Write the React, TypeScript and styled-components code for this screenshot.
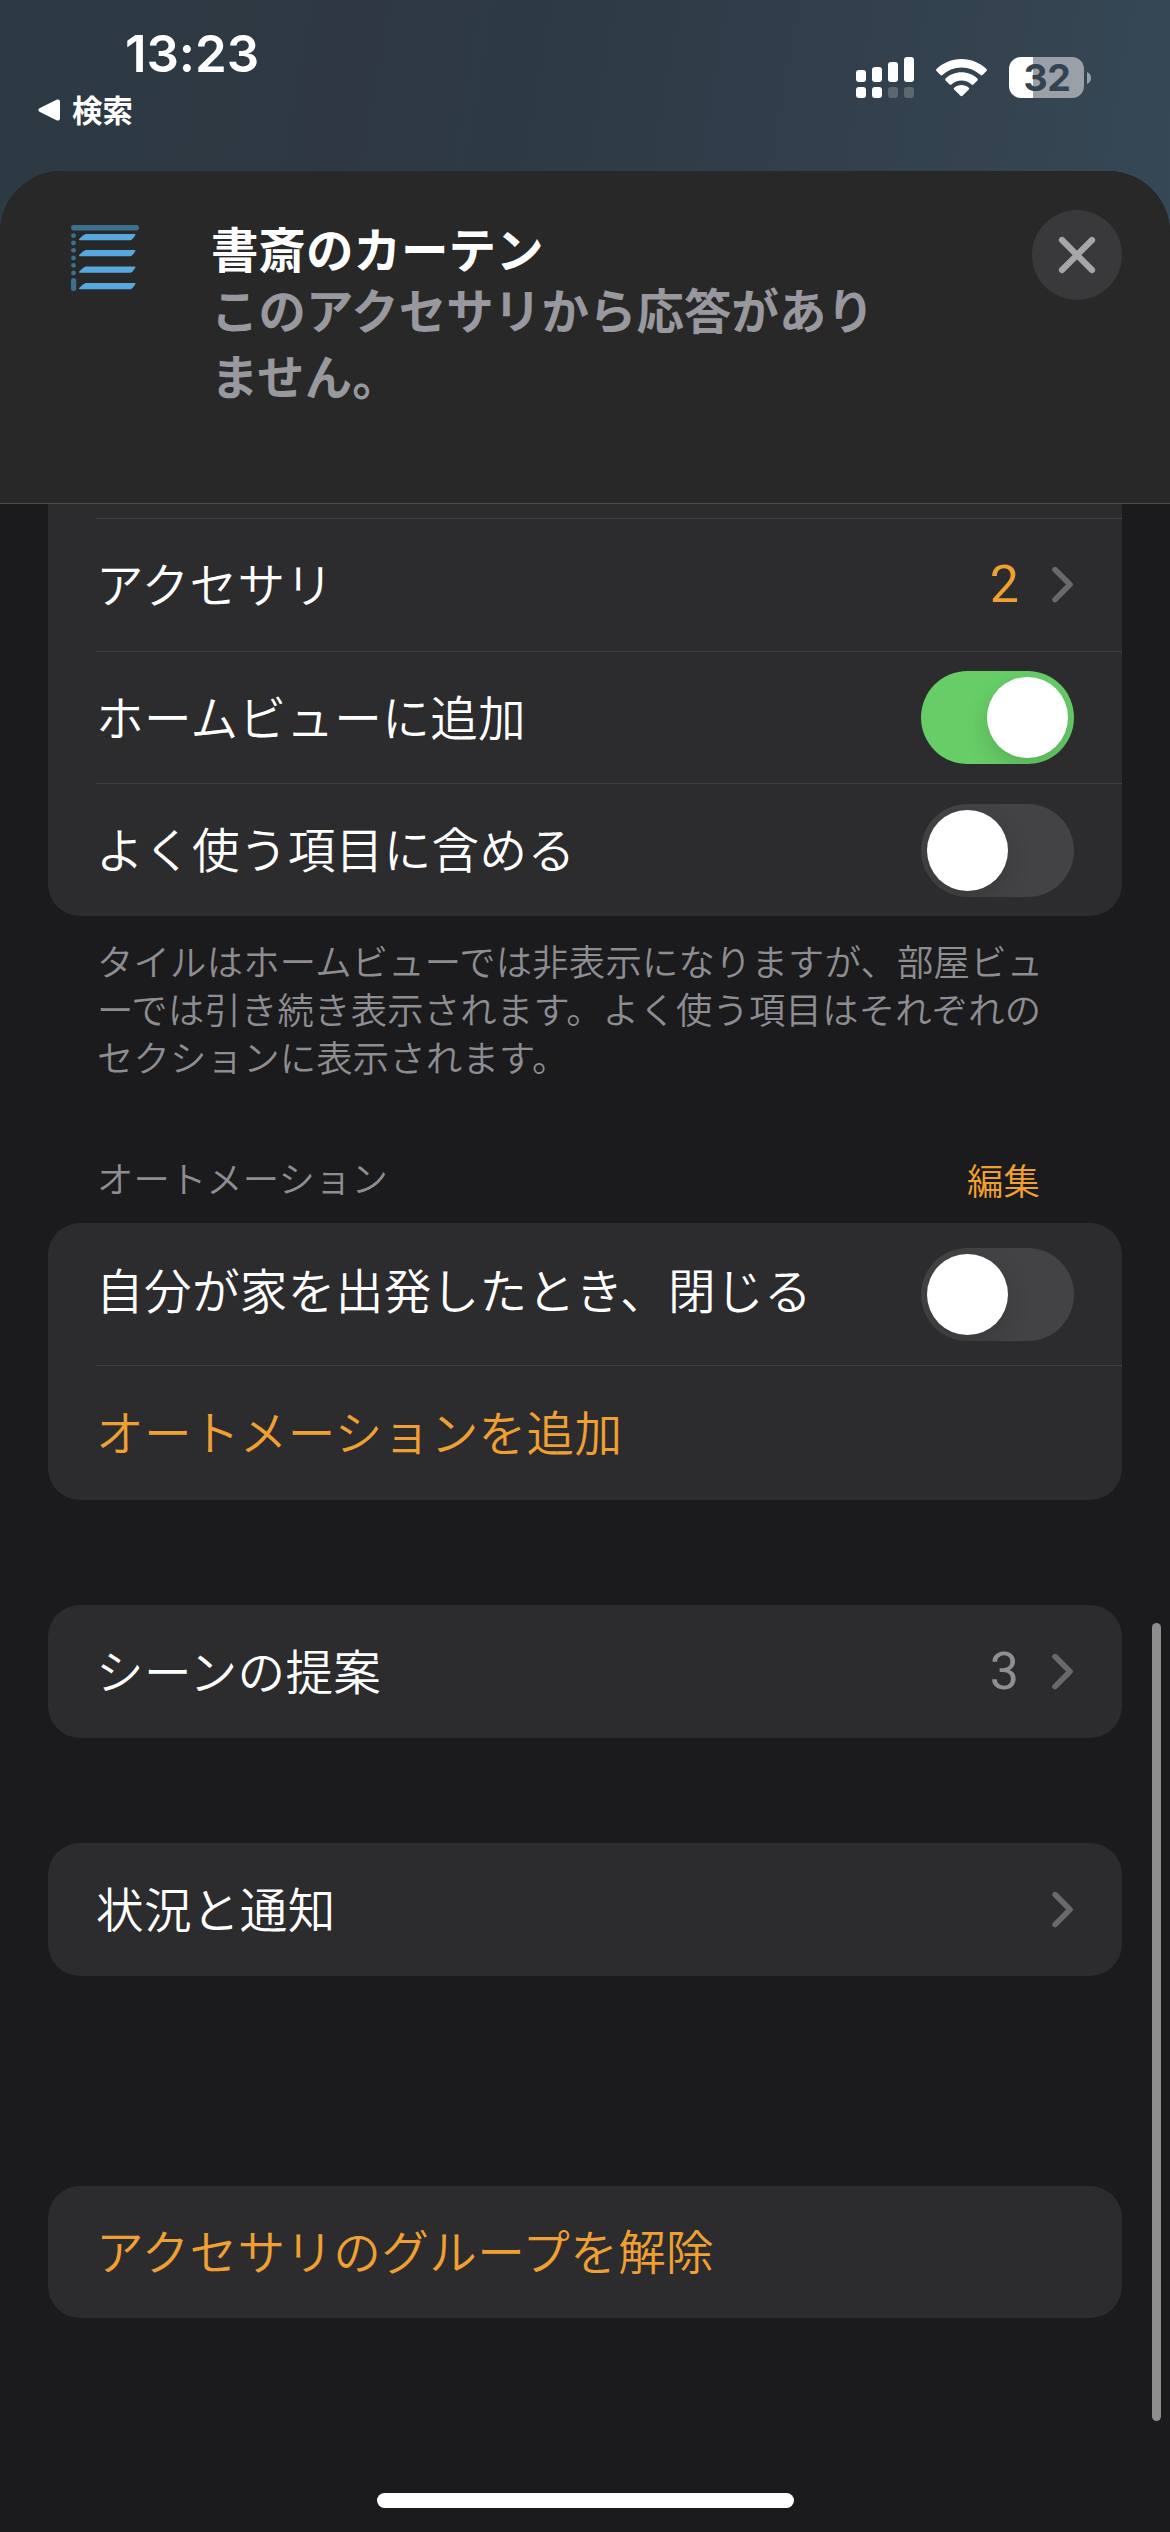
import React from "react";
import styled, { createGlobalStyle } from "styled-components";

const jp = `"Noto Sans CJK JP", "Noto Sans", sans-serif`;
const latin = `Inter, "Noto Sans CJK JP", sans-serif`;
const accent = "#f0a033";

const GlobalStyle = createGlobalStyle`
  * { box-sizing: border-box; }
  html, body { margin: 0; padding: 0; background: #1b1b1d; }
`;

const Screen = styled.div`
  position: relative;
  display: flex;
  flex-direction: column;
  width: 1170px;
  height: 2532px;
  overflow: hidden;
  font-family: ${jp};
  color: #fff;
  background: linear-gradient(100deg, #2c3a43 0px, #2f3842 360px, #2d3a44 520px, #32404e 860px, #34434f 1000px, #364857 1200px);
`;

const StatusBar = styled.header`
  display: flex;
  justify-content: space-between;
  flex: none;
  height: 171px;
  padding: 0 79px 0 38px;
`;

const StatusLeft = styled.div`
  display: flex;
  flex-direction: column;
  padding-top: 24px;
`;

const Clock = styled.time`
  padding-left: 87px;
  font: 600 51px/60px ${latin};
  letter-spacing: -0.1px;
`;

const BackLink = styled.a`
  display: flex;
  align-items: center;
  gap: 12px;
  height: 40px;
  margin-top: 6px;
  font: 700 30.4px/40px ${jp};
  color: #fff;

  span { margin-top: -3px; }
`;

const StatusIcons = styled.div`
  display: flex;
  align-items: flex-start;
  gap: 22px;
  padding-top: 57px;
`;

const Battery = styled.div`
  display: flex;
  align-items: center;
  gap: 3px;
`;

const BatteryBody = styled.div<{ $level: number }>`
  width: 75px;
  height: 41px;
  padding-left: 1px;
  border-radius: 12px;
  background: linear-gradient(
    to right,
    #fff ${(p) => p.$level}%,
    #99a0a8 ${(p) => p.$level}%
  );
  color: #34434f;
  font: 700 37.5px/42px ${latin};
  letter-spacing: -0.5px;
  text-align: center;
`;

const Sheet = styled.main`
  display: flex;
  flex-direction: column;
  flex: 1;
  border-radius: 62px 62px 0 0;
  background: #1b1b1d;
  overflow: hidden;
`;

const SheetHeader = styled.div`
  display: flex;
  align-items: flex-start;
  flex: none;
  height: 333px;
  padding: 39px 48px 0 71px;
  border-bottom: 1px solid #4a4a4b;
  background: #282828;
`;

const BlindIcon = styled.svg`
  flex: none;
  width: 68px;
  height: 66px;
  margin: 15px 72px 0 0;
`;

const Heading = styled.div`
  flex: 1;
  padding-top: 12px;
`;

const Title = styled.h1`
  margin: 0;
  font: 700 47.5px/57px ${latin};
`;

const Subtitle = styled.p`
  width: 640px;
  margin: 0;
  font: 700 47.4px/66px ${latin};
  letter-spacing: 0.15px;
  color: #98989e;
  white-space: nowrap;
`;

const CloseButton = styled.button`
  display: grid;
  place-items: center;
  width: 90px;
  height: 90px;
  padding: 0;
  border: 0;
  border-radius: 50%;
  background: #39393b;
`;

const List = styled.div`
  display: flex;
  flex-direction: column;
  padding: 0 48px;
`;

const Card = styled.section<{ $gap?: number; $cut?: boolean }>`
  margin-top: ${(p) => p.$gap ?? 0}px;
  padding-top: ${(p) => (p.$cut ? 14 : 0)}px;
  border-radius: ${(p) => (p.$cut ? "0 0 32px 32px" : "32px")};
  background: #2c2c2e;
`;

const RowBox = styled.div<{ $height: number; $line?: boolean; $lift: number }>`
  display: flex;
  align-items: center;
  height: ${(p) => p.$height}px;
  margin-left: 48px;
  padding-right: 48px;
  border-top: ${(p) => (p.$line ? "1px solid #3f3f41" : "0")};

  > span:first-child {
    flex: 1;
    padding-bottom: ${(p) => p.$lift * 2}px;
  }
`;

const Label = styled.span<{ $accent?: boolean }>`
  font: 350 47.6px/60px ${jp};
  letter-spacing: 0.35px;
  color: ${(p) => (p.$accent ? accent : "#fff")};
`;

const Value = styled.span<{ $accent?: boolean }>`
  margin-right: 32px;
  font: 400 52px/60px Roboto, ${latin};
  color: ${(p) => (p.$accent ? accent : "#8e8e93")};
`;

const Track = styled.span<{ $on?: boolean }>`
  display: flex;
  justify-content: ${(p) => (p.$on ? "flex-end" : "flex-start")};
  width: 153px;
  height: 93px;
  padding: 6px;
  border-radius: 47px;
  background: ${(p) => (p.$on ? "#67ce67" : "#434345")};
  overflow: hidden;
`;

const Knob = styled.span`
  width: 81px;
  height: 81px;
  border-radius: 50%;
  background: #fff;
  box-shadow: 0 9px 24px rgba(0, 0, 0, 0.15);
`;

const Footnote = styled.p`
  margin: 20px 0 0;
  padding-left: 49px;
  font: 350 36.3px/48px ${jp};
  letter-spacing: 0.25px;
  color: #8d8d92;
  white-space: nowrap;
`;

const SectionHead = styled.div`
  display: flex;
  justify-content: space-between;
  height: 48px;
  margin: 73px 82px 22px 49px;
  font: 350 36.3px/48px ${jp};
  letter-spacing: 0.15px;
  color: #8d8d92;
`;

const EditLink = styled.a`
  padding-top: 2px;
  color: ${accent};
`;

const ScrollThumb = styled.div`
  position: absolute;
  top: 1623px;
  right: 9px;
  width: 9px;
  height: 798px;
  border-radius: 5px;
  background: #8d8d8e;
`;

const HomeIndicator = styled.div`
  position: absolute;
  left: 377px;
  bottom: 24px;
  width: 417px;
  height: 15px;
  border-radius: 8px;
  background: #fff;
`;

const Chevron = () => (
  <svg width="23" height="38" viewBox="0 0 23 38" fill="none">
    <path d="M4 3.6 19 18.5 4 33.6" stroke="#69696c" strokeWidth="5.6" strokeLinecap="round" strokeLinejoin="round" />
  </svg>
);

const signalBars = [
  { top: 13, on: true },
  { top: 10, on: true },
  { top: 5, on: false },
  { top: 0, on: false },
];

const Signal = () => (
  <svg width="58" height="41" viewBox="0 0 58 41" fill="#fff">
    {signalBars.map((bar, i) => (
      <g key={i}>
        <rect x={i * 16} y={bar.top} width="10" height={25 - bar.top} rx="3" />
        <rect x={i * 16} y="30" width="10" height="11" rx="3" opacity={bar.on ? 1 : 0.2} />
      </g>
    ))}
  </svg>
);

const Wifi = () => (
  <svg width="51" height="41" viewBox="0 0 51 41" fill="#fff">
    <path d="M25.5 2C35.2 2 44 5.8 50.5 12.1c.6.6.6 1.4 0 2l-4 4c-.5.5-1.3.5-1.9 0C39.600 13.300 33 10.400 25.500 10.400S11.400 13.300 6.400 18.100c-.6.5-1.400.5-1.900 0l-4-4c-.6-.6-.6-1.400 0-2C7 5.800 15.800 2 25.500 2Z" />
    <path d="M25.500 15.200c6.100 0 11.700 2.300 15.900 6.200.6.6.6 1.400 0 2l-4 4c-.5.500-1.300.500-1.900 0-2.600-2.400-6.100-3.800-10-3.800s-7.400 1.400-10 3.800c-.6.500-1.400.500-1.900 0l-4-4c-.6-.6-.6-1.400 0-2 4.200-3.900 9.800-6.200 15.900-6.200Z" />
    <path d="M25.500 28c2.800 0 5.300 1 7.300 2.700.6.500.6 1.400.1 1.900l-6.400 6.200c-.6.500-1.400.500-2 0l-6.400-6.200c-.5-.5-.5-1.400.1-1.900 2-1.700 4.500-2.700 7.300-2.700Z" />
  </svg>
);

const Blinds = () => (
  <BlindIcon viewBox="0 0 68 66">
    <g fill="#3d6f8f">
      <rect x="0" y="0" width="68" height="5.500" rx="2.400" />
      {[10.700, 18, 25.300, 33, 40.300, 48].map((cy) => (
        <circle key={cy} cx="2.500" cy={cy} r="2.400" />
      ))}
      <rect x="0" y="53" width="5.200" height="13" rx="2.500" />
    </g>
    <g fill="#56a8de">
      {[9, 25, 41.600, 58].map((y) => (
        <path
          key={y}
          transform={`translate(8 ${y})`}
          d="M8 0H55.500c.9 0 1.200.5.800 1.200L54 4.400C53.200 5.600 52 6.200 50.500 6.200H.8C0 6.200-.3 5.600.200 5L3.800 1.600C5 .5 6.400 0 8 0Z"
        />
      ))}
    </g>
  </BlindIcon>
);

type RowProps = {
  label: string;
  height: number;
  line?: boolean;
  accented?: boolean;
  lift?: number;
  children?: React.ReactNode;
};

const Row = ({ label, height, line, accented, lift = 2, children }: RowProps) => (
  <RowBox $height={height} $line={line} $lift={lift}>
    <Label $accent={accented}>{label}</Label>
    {children}
  </RowBox>
);

const Toggle = ({ on }: { on?: boolean }) => (
  <Track $on={on} role="switch" aria-checked={!!on}>
    <Knob />
  </Track>
);

export default function App() {
  return (
    <Screen lang="ja">
      <GlobalStyle />
      <StatusBar>
        <StatusLeft>
          <Clock>13:23</Clock>
          <BackLink>
            <svg width="22" height="22" viewBox="0 0 22 22" fill="#fff">
              <path d="M1.500 9.300 18.500.8C20.300 0 22 .9 22 2.800V19.200C22 21.100 20.300 22 18.500 21.200L1.500 12.700C0 11.900 0 10.100 1.500 9.300Z" />
            </svg>
            <span>検索</span>
          </BackLink>
        </StatusLeft>
        <StatusIcons>
          <Signal />
          <Wifi />
          <Battery>
            <BatteryBody $level={32}>32</BatteryBody>
            <svg width="4" height="12" viewBox="0 0 4 12" fill="#99a0a8">
              <path d="M0 0C2.500 1 4 3.300 4 6S2.500 11 0 12Z" />
            </svg>
          </Battery>
        </StatusIcons>
      </StatusBar>

      <Sheet>
        <SheetHeader>
          <Blinds />
          <Heading>
            <Title>書斎のカーテン</Title>
            <Subtitle>
              このアクセサリから応答があり
              <br />
              ません。
            </Subtitle>
          </Heading>
          <CloseButton aria-label="閉じる">
            <svg width="38" height="38" viewBox="0 0 38 38">
              <path d="M4 4 34 34M34 4 4 34" stroke="#a5a5aa" strokeWidth="6.200" strokeLinecap="round" />
            </svg>
          </CloseButton>
        </SheetHeader>

        <List>
          <Card $cut>
            <Row label="アクセサリ" height={133} line>
              <Value $accent>2</Value>
              <Chevron />
            </Row>
            <Row label="ホームビューに追加" height={132} line>
              <Toggle on />
            </Row>
            <Row label="よく使う項目に含める" height={133} line>
              <Toggle />
            </Row>
          </Card>
          <Footnote>
            タイルはホームビューでは非表示になりますが、部屋ビュ
            <br />
            ーでは引き続き表示されます。よく使う項目はそれぞれの
            <br />
            セクションに表示されます。
          </Footnote>

          <SectionHead>
            <span>オートメーション</span>
            <EditLink>編集</EditLink>
          </SectionHead>
          <Card>
            <Row label="自分が家を出発したとき、閉じる" height={142} lift={5}>
              <Toggle />
            </Row>
            <Row label="オートメーションを追加" height={135} line accented />
          </Card>

          <Card $gap={105}>
            <Row label="シーンの提案" height={133}>
              <Value>3</Value>
              <Chevron />
            </Row>
          </Card>

          <Card $gap={105}>
            <Row label="状況と通知" height={133}>
              <Chevron />
            </Row>
          </Card>

          <Card $gap={210}>
            <Row label="アクセサリのグループを解除" height={132} accented />
          </Card>
        </List>
      </Sheet>

      <ScrollThumb />
      <HomeIndicator />
    </Screen>
  );
}
